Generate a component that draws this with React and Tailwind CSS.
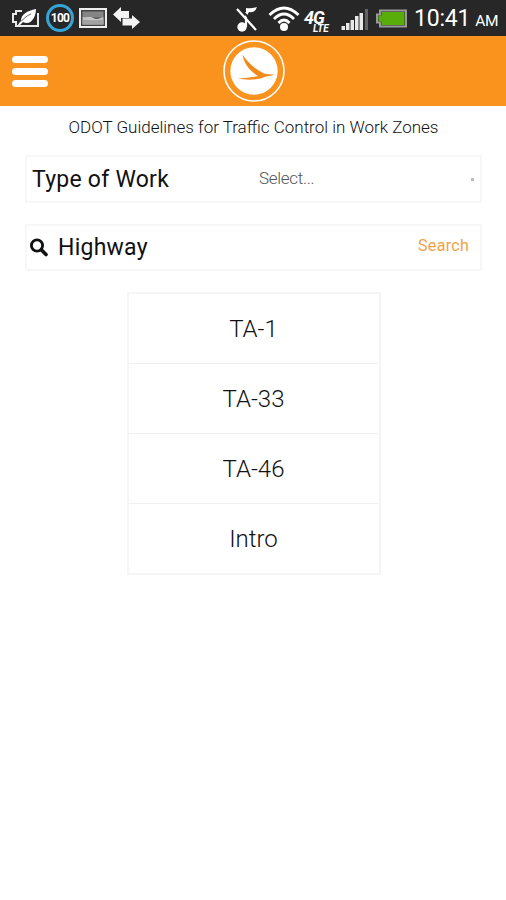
import { useState } from "react";

const results = ["TA-1", "TA-33", "TA-46", "Intro"];

// Battery outline with a leaf (power saver)
const PowerSaverIcon = () => (
  <svg width="30" height="20" viewBox="0 0 30 20" fill="none">
    <path d="M11 3H5v3H2v8h3v4h22V5" stroke="#e8e8e8" strokeWidth="2" />
    <path
      d="M7 17c1-2 2-3 3-4 0-7 6-10 15-12 0 9-6 17-13 13l-3 3z"
      fill="#fff"
    />
    <path d="M10 13.500C13 10 17 7 20 6" stroke="#555" strokeWidth="0.900" />
  </svg>
);

const PictureIcon = () => (
  <svg width="28" height="22" viewBox="0 0 28 22">
    <rect x="1" y="2" width="26" height="18" fill="#444" stroke="#eee" strokeWidth="2" />
    <rect x="3.500" y="4.500" width="21" height="6" fill="#858585" />
    <path d="M3.500 10c4 1 8-1 11 1s6 0 10-1v7.500h-21z" fill="#c4c4c4" />
    <path d="M3.500 13c6-1 12 2 21-1v5.500h-21z" fill="#a2a2a2" />
  </svg>
);

const TransferIcon = () => (
  <svg width="27" height="23" viewBox="0 0 27 23" fill="#f4f4f4">
    <path d="M0 7.500 8 0v4h8v7H8v4z" />
    <path d="M27 15 19 8v3.500H9.500v7H19V22z" />
  </svg>
);

const MutedIcon = () => (
  <svg width="22" height="28" viewBox="0 0 22 28" fill="none">
    <circle cx="6" cy="22" r="4.700" fill="#fff" />
    <path d="M10 22V7" stroke="#fff" strokeWidth="2.200" />
    <path d="M10 12V3q5 1 11-1-2 6-8 5z" fill="#fff" />
    <path d="M4 3 21 22" stroke="#272727" strokeWidth="2" />
    <path d="M1 4 20 25" stroke="#fff" strokeWidth="2.200" />
  </svg>
);

const WifiIcon = () => (
  <svg width="32" height="27" viewBox="0 0 32 27" fill="none" stroke="#fff" strokeWidth="2.800">
    <path d="M1.500 10Q16-4 30.500 10" />
    <path d="M6 14Q16 4 26 14" />
    <path d="M10.500 18Q16 12 21.500 18" />
    <circle cx="16" cy="22" r="4" fill="#fff" stroke="none" />
  </svg>
);

const SignalIcon = () => (
  <svg width="28" height="22" viewBox="0 0 28 22" fill="#e8e8e8">
    <rect x="0.500" y="17" width="3.500" height="4" />
    <rect x="5" y="14" width="3.500" height="7" />
    <rect x="9.500" y="11" width="3.500" height="10" />
    <rect x="14" y="7" width="3.500" height="14" />
    <rect x="18.500" y="4" width="3.500" height="17" />
    <rect x="24" y="0" width="3" height="21" fill="#636363" />
  </svg>
);

const BatteryIcon = () => (
  <svg width="33" height="19" viewBox="0 0 33 19">
    <path
      d="M5 1.500h26v16H5v-4H2v-8h3z"
      fill="#333"
      stroke="#999"
      strokeWidth="2"
    />
    <path d="M6.500 3h23v13h-23v-3.500h-3v-6h3z" fill="#58ad0b" />
  </svg>
);

// White disc with a bird whose wings meet at the right
const Logo = () => (
  <svg width="64" height="64" viewBox="0 0 64 64">
    <circle cx="32" cy="32" r="30" fill="none" stroke="#fff" strokeWidth="1.600" />
    <circle cx="32" cy="32" r="23.700" fill="#fff" />
    <path
      d="M20.500 15.500C26 24 33 30 42 34.500Q46 35.500 52.500 35.500Q49 37 44 37.500C37 41 25 41.500 16 39.500Q27 39 36 37C28 32 22 25 20.500 15.500Z"
      fill="#f28a1a"
    />
  </svg>
);

const SearchIcon = () => (
  <svg width="19" height="19" viewBox="0 0 19 19" fill="none" stroke="#111">
    <circle cx="7" cy="7.500" r="5.600" strokeWidth="2.800" />
    <path d="m11.500 12 4.500 4.500" strokeWidth="3.600" strokeLinecap="round" />
  </svg>
);

const StatusBar = () => (
  <div className="flex h-9 items-center bg-[#272727] pl-[11px] text-white">
    <PowerSaverIcon />
    <div className="ml-[5px] flex h-[28px] w-[28px] items-center justify-center rounded-full border-[3px] border-[#35a5d6] text-[12px] font-bold tracking-[-0.7px]">
      100
    </div>
    <div className="ml-[5px]">
      <PictureIcon />
    </div>
    <div className="ml-[6px]">
      <TransferIcon />
    </div>
    <div className="ml-[96px] pt-0.5">
      <MutedIcon />
    </div>
    <div className="ml-[10px]">
      <WifiIcon />
    </div>
    <div className="ml-[4px] flex w-[30px] flex-col pt-[6px] font-bold italic">
      <span className="block h-[14px] text-[18px] leading-[15px] tracking-[-1px]">4G</span>
      <span className="block h-[9px] pl-[9px] text-[10px] leading-[9px]">LTE</span>
    </div>
    <div className="ml-[7px] pt-[3px]">
      <SignalIcon />
    </div>
    <div className="ml-[6px]">
      <BatteryIcon />
    </div>
    <div className="ml-[6px] flex items-baseline whitespace-nowrap pt-[3px]">
      <span className="text-[23px] leading-7 tracking-[-0.2px]">10:41</span>
      <span className="ml-[5px] text-[15.5px] tracking-[-0.3px]">AM</span>
    </div>
  </div>
);

export default function App() {
  const [query, setQuery] = useState("Highway");

  return (
    <div className="min-h-[900px] w-[506px] overflow-hidden bg-white font-['Roboto',sans-serif] text-[#111]">
      <StatusBar />

      {/* App header */}
      <header className="grid h-[70px] grid-cols-[1fr_64px_1fr] items-center bg-[#f9931e]">
        <button type="button" aria-label="Menu" className="ml-3 flex w-9 flex-col gap-[5px]">
          <span className="h-[7px] rounded-full bg-white"></span>
          <span className="h-[7px] rounded-full bg-white"></span>
          <span className="h-[7px] rounded-full bg-white"></span>
        </button>
        <div className="ml-px">
          <Logo />
        </div>
      </header>

      <main className="pl-[25px] pr-6">
        <h1 className="pt-[9px] text-center text-[17px] font-light leading-6">
          ODOT Guidelines for Traffic Control in Work Zones
        </h1>

        {/* Type filter */}
        <div className="mt-4 flex h-12 items-center border-2 border-[#f7f7f7] pl-[5px] pr-1.5">
          <span className="w-[227px] pt-0.5 text-[23px] tracking-[0.25px]">Type of Work</span>
          <span className="flex-1 text-[17px] font-light tracking-[-0.3px] text-[#555]">
            Select...
          </span>
          <span className="h-[3px] w-[3px] bg-[#bbb]"></span>
        </div>

        {/* Search field */}
        <div className="mt-[21px] flex h-[47px] items-center border-2 border-[#f7f7f7] pl-[3px] pr-[11px]">
          <SearchIcon />
          <input
            value={query}
            onChange={(e) => setQuery(e.target.value)}
            aria-label="Search"
            className="ml-[9px] w-0 flex-1 pt-px text-[23px] tracking-[0.25px] outline-none"
          />
          <button type="button" className="pb-1 text-[16px] tracking-[0.3px] text-[#f2a144]">
            Search
          </button>
        </div>

        <ul className="mx-auto mt-[21px] w-[254px] border-2 border-[#f5f5f5]">
          {results.map((item) => (
            <li
              key={item}
              className="flex h-[70px] items-center justify-center border-b border-[#f0f0f0] text-[24px] font-light last:h-[69px] last:border-b-0"
            >
              {item}
            </li>
          ))}
        </ul>
      </main>
    </div>
  );
}
